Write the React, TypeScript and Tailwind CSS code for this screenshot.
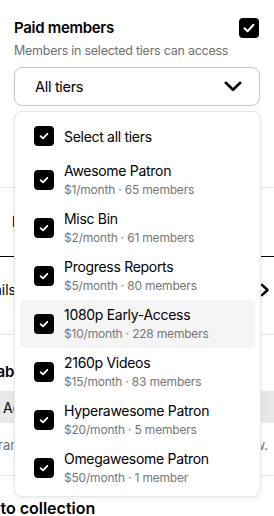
import { useState } from "react";

interface Tier {
  name: string;
  price: number;
  members: number;
}

const tiers: Tier[] = [
  { name: "Awesome Patron", price: 1, members: 65 },
  { name: "Misc Bin", price: 2, members: 61 },
  { name: "Progress Reports", price: 5, members: 80 },
  { name: "1080p Early-Access", price: 10, members: 228 },
  { name: "2160p Videos", price: 15, members: 83 },
  { name: "Hyperawesome Patron", price: 20, members: 5 },
  { name: "Omegawesome Patron", price: 50, members: 1 },
];

function CheckBox({ big = false }: { big?: boolean }) {
  return (
    <span className="flex h-5 w-5 shrink-0 items-center justify-center rounded-[4px] bg-black">
      {big ? (
        <svg width="12" height="10" viewBox="0 0 12 10" fill="none">
          <path d="M1.5 5.2 4.6 8.2 10.5 1.8" stroke="white" strokeWidth="2" strokeLinecap="round" strokeLinejoin="round" />
        </svg>
      ) : (
        <svg width="10" height="8" viewBox="0 0 10 8" fill="none">
          <path d="M1.6 4.2 4 6.4 8.4 1.8" stroke="white" strokeWidth="1.8" strokeLinecap="round" strokeLinejoin="round" />
        </svg>
      )}
    </span>
  );
}

export default function App() {
  const [hovered] = useState("1080p Early-Access");

  return (
    <div className="relative h-[516px] w-[274px] overflow-hidden bg-white font-['Inter',sans-serif] text-black">
      {/* access settings */}
      <div className="px-[14px] pt-[18px]">
        <div className="flex items-start justify-between">
          <div>
            <div className="text-[15px] font-semibold leading-5 tracking-[-0.3px]">Paid members</div>
            <div className="mt-[3px] text-[12.5px] leading-5 tracking-[-0.25px] text-[#707070]">
              Members in selected tiers can access
            </div>
          </div>
          <div className="mr-px">
            <CheckBox big />
          </div>
        </div>
        <div className="mt-[6px] flex h-[39px] items-center justify-between rounded-lg border border-[#c4c4c4] pl-5 pr-[17px]">
          <span className="text-[14.5px] tracking-[-0.3px]">All tiers</span>
          <svg width="18" height="11" viewBox="0 0 18 11" fill="none">
            <path d="M1.8 1.8 9 8.8 16.2 1.8" stroke="black" strokeWidth="2.6" strokeLinecap="round" strokeLinejoin="round" />
          </svg>
        </div>
      </div>

      {/* rest of the panel, partly behind the menu */}
      <div className="mt-[81px] border-t border-[#e6e6e6]">
        <div className="flex h-[68px] items-center pl-3">
          <span className="text-[15px] font-semibold">Include in feed</span>
        </div>
        <div className="border-t border-black">
          <div className="flex h-[77px] items-center justify-between pb-[12px] pr-[4px]">
            <span className="-ml-[29px] text-[14px]">Details</span>
            <svg width="10" height="14" viewBox="0 0 10 14" fill="none">
              <path d="M2 1.8 7.6 7 2 12.2" stroke="black" strokeWidth="2.4" strokeLinecap="round" strokeLinejoin="round" />
            </svg>
          </div>
        </div>
        <div className="border-t border-[#e6e6e6] pb-[20px] pt-[27px]">
          <div className="-ml-[12px] text-[15px] font-semibold leading-5">Labels</div>
          <div className="mt-[9px] flex h-8 items-center bg-[#e8e8e8] pl-[3px] text-[14px]">Add label</div>
          <div className="mt-[12px] flex items-center justify-between pr-[6px] text-[13px] leading-5 text-[#6f6f6f]">
            <span className="-ml-[44px]">Temporary</span>
            <span>now.</span>
          </div>
        </div>
        <div className="border-t border-[#e6e6e6] pt-[22px]">
          <div className="-ml-[35px] text-[16px] font-semibold leading-5">Add to collection</div>
        </div>
      </div>

      {/* tier picker menu */}
      <div className="absolute left-[14px] top-[111px] w-[247px] rounded-lg border border-[#e6e6e6] bg-white px-[5px] py-[4px] shadow-[0_2px_6px_rgba(0,0,0,0.06)]">
        <div className="flex h-10 items-center gap-[10px] pl-[14px]">
          <CheckBox />
          <span className="text-[14px] tracking-[-0.3px]">Select all tiers</span>
        </div>
        {tiers.map((t) => (
          <div
            key={t.name}
            className={
              "flex h-12 items-center gap-[10px] rounded-[5px] pl-[14px] " +
              (t.name === hovered ? "bg-[#f5f5f5]" : "")
            }
          >
            <CheckBox />
            <div className="min-w-0">
              <div className="text-[14px] leading-5 tracking-[-0.3px]">{t.name}</div>
              <div className="text-[12px] leading-[18px] tracking-[-0.2px] text-[#767676]">
                ${t.price}/month · {t.members} {t.members === 1 ? "member" : "members"}
              </div>
            </div>
          </div>
        ))}
      </div>
    </div>
  );
}
